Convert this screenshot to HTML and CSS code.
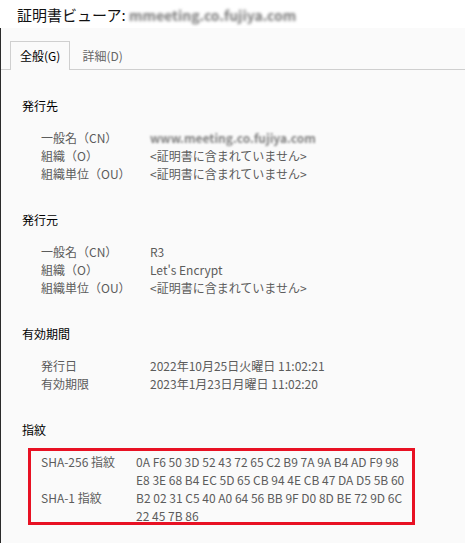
FILE: index.html
```html
<!DOCTYPE html>
<html lang="ja">
<head>
  <meta charset="UTF-8">
  <meta name="viewport" content="width=device-width, initial-scale=1.0">
  <title>証明書ビューア</title>
  <link rel="stylesheet" href="styles.css">
</head>
<body>

  <div class="titlebar">証明書ビューア: <span class="masked">mmeeting.co.fujiya.com</span></div>

  <div class="window">
    <div class="tabs">
      <div class="tab active">全般(G)</div>
      <div class="tab">詳細(D)</div>
    </div>

    <div class="content">
      <section class="group">
        <h2>発行先</h2>
        <div class="fields">
          <span>一般名（CN）</span><span><span class="masked-value">www.meeting.co.fujiya.com</span></span>
          <span>組織（O）</span><span>&lt;証明書に含まれていません&gt;</span>
          <span>組織単位（OU）</span><span>&lt;証明書に含まれていません&gt;</span>
        </div>
      </section>

      <section class="group">
        <h2>発行元</h2>
        <div class="fields">
          <span>一般名（CN）</span><span>R3</span>
          <span>組織（O）</span><span>Let's Encrypt</span>
          <span>組織単位（OU）</span><span>&lt;証明書に含まれていません&gt;</span>
        </div>
      </section>

      <section class="group">
        <h2>有効期間</h2>
        <div class="fields">
          <span>発行日</span><span>2022年10月25日火曜日 11:02:21</span>
          <span>有効期限</span><span>2023年1月23日月曜日 11:02:20</span>
        </div>
      </section>

      <section class="group">
        <h2>指紋</h2>
        <div class="highlight">
          <div class="fields hashes">
            <span>SHA-256 指紋</span>
            <span>0A F6 50 3D 52 43 72 65 C2 B9 7A 9A B4 AD F9 98<br>E8 3E 68 B4 EC 5D 65 CB 94 4E CB 47 DA D5 5B 60</span>
            <span>SHA-1 指紋</span>
            <span>B2 02 31 C5 40 A0 64 56 BB 9F D0 8D BE 72 9D 6C<br>22 45 7B 86</span>
          </div>
        </div>
      </section>
    </div>
  </div>

</body>
</html>
```

FILE: styles.css
```css
body {
  font-family: 'Noto Sans CJK JP', 'Noto Sans', sans-serif;
  font-size: 12px;
  background-color: white;
  color: #000;
  margin: 0;
  height: 543px;
  display: flex;
  flex-direction: column;
  overflow: hidden;
}

.titlebar {
  height: 28px;
  padding: 2px 0 0 17px;
  box-sizing: border-box;
  font-size: 15px;
  line-height: 25px;
  color: #111;
  white-space: nowrap;
}

.masked {
  display: inline-block;
  color: #7a7a7a;
  font-weight: bold;
  font-size: 14px;
  filter: blur(1.4px);
}

.window {
  flex: 1;
  background-color: #fafafa;
  border-left: 1px solid #2b2b2b;
}

.tabs {
  display: flex;
  padding: 13px 0 0 9px;
  border-bottom: 1px solid #cfcfcf;
}

.tab {
  height: 27px;
  line-height: 27px;
  padding: 0 11px;
  color: #666;
  border: 1px solid transparent;
  border-bottom: none;
}

.tab.active {
  padding: 0 9px;
  color: #000;
  background-color: #fafafa;
  border-color: #cfcfcf;
  margin-bottom: -1px;
  height: 28px;
}

.content {
  padding: 27px 0 0 21px;
}

.group {
  margin-bottom: 28px;
}

.group h2 {
  font-size: 12px;
  font-weight: normal;
  line-height: 18px;
  margin: 0;
}

.fields {
  display: grid;
  grid-template-columns: 109px 1fr;
  margin-top: 14px;
  padding-left: 19px;
  line-height: 18px;
  color: #5c5c5c;
}

.masked-value {
  display: inline-block;
  color: #808080;
  font-weight: bold;
  filter: blur(1.2px);
}

.highlight {
  width: 387px;
  box-sizing: border-box;
  margin: 9px 0 0 6px;
  border: 3px solid #e81123;
  padding: 2px 0 0 10px;
  height: 77px;
}

.hashes {
  grid-template-columns: 95px 1fr;
  margin-top: 0;
  padding-left: 0;
}
```
